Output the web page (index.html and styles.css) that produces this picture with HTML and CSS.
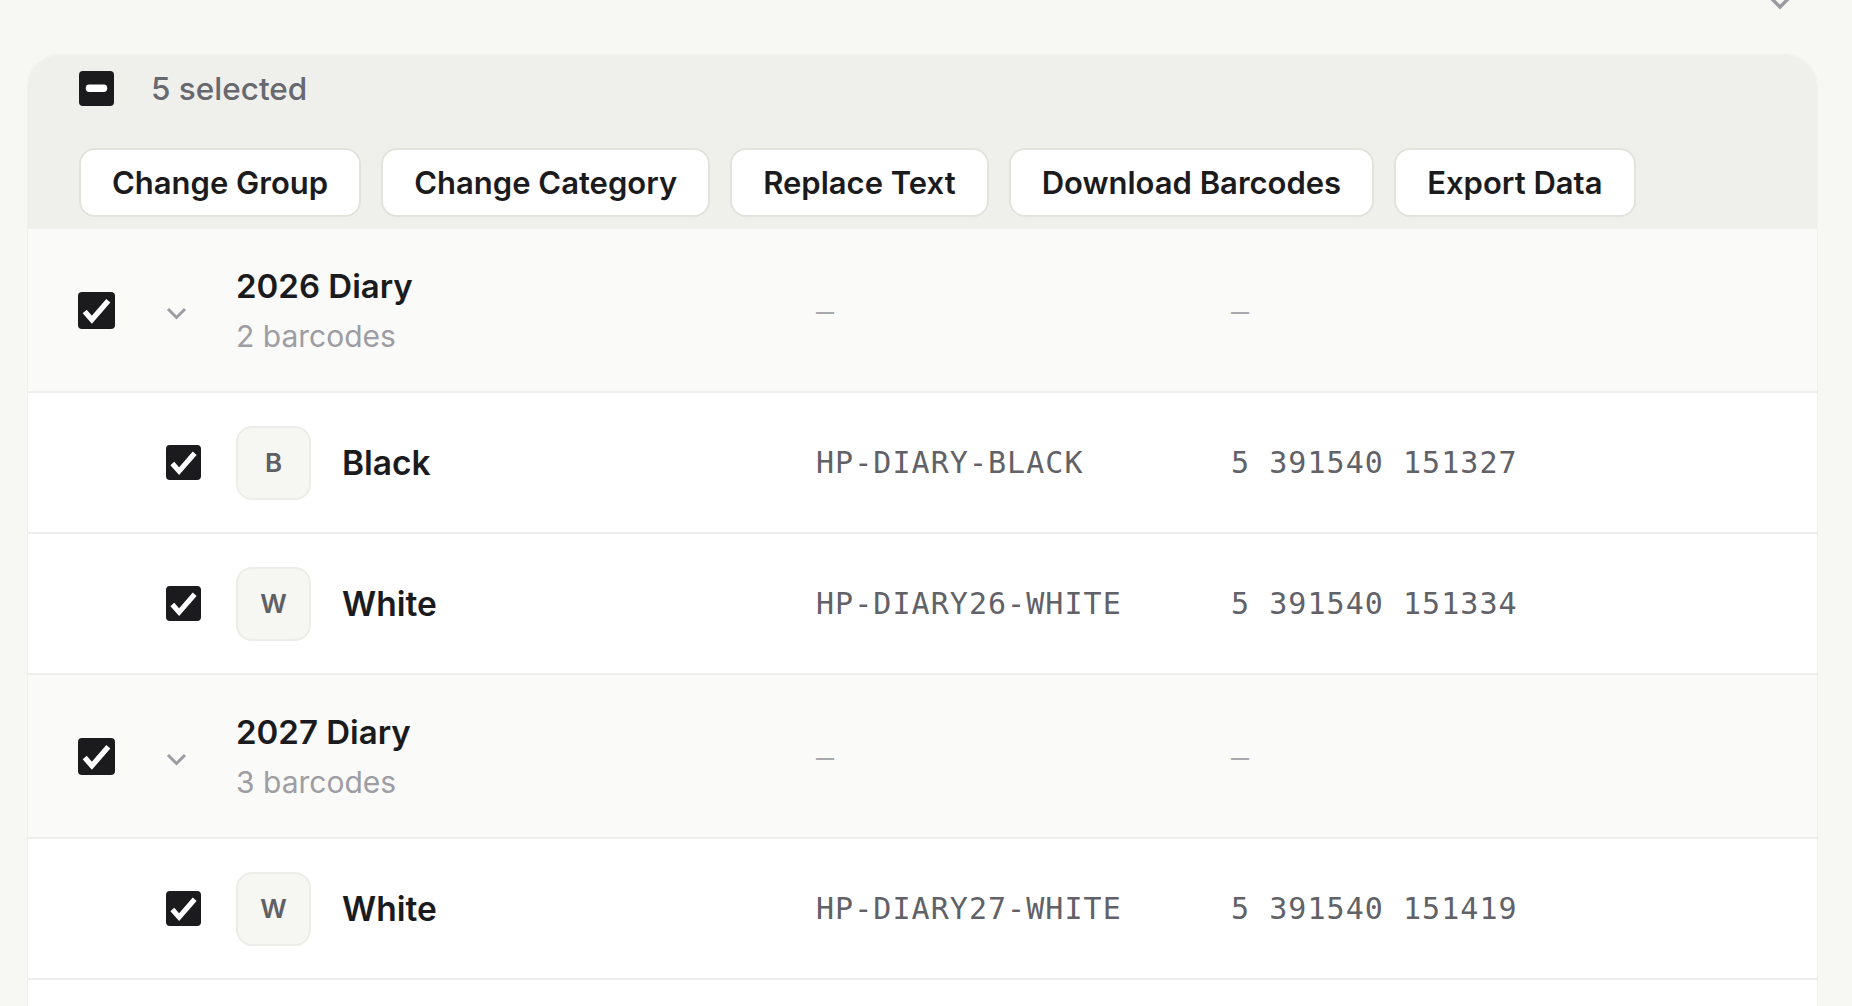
FILE: index.html
```html
<!DOCTYPE html>
<html>
<head>
  <meta charset="UTF-8">
  <meta name="viewport" content="width=device-width, initial-scale=1.0">
  <link rel="stylesheet" href="styles.css">
</head>
<body>
  <svg class="defs" width="0" height="0">
    <symbol id="box-checked" viewBox="0 0 36 36">
      <rect width="36" height="36" rx="4" fill="#1b1b1d"/>
      <polyline points="6.5,19 13.5,27 29.5,8.5" fill="none" stroke="#fff" stroke-width="5.2"/>
    </symbol>
    <symbol id="box-partial" viewBox="0 0 36 36">
      <rect width="36" height="36" rx="4" fill="#1b1b1d"/>
      <rect x="7" y="14" width="22" height="7.5" rx="3.5" fill="#fff"/>
    </symbol>
    <symbol id="chevron" viewBox="0 0 21 13">
      <polyline points="2,2 10.5,10.5 19,2" fill="none" stroke="currentColor" stroke-width="3"/>
    </symbol>
  </svg>

  <div class="topbar">
    <svg class="top-chevron" viewBox="0 0 20 20"><polyline points="2,6 10,14 18,6" fill="none" stroke="currentColor" stroke-width="3.4"/></svg>
  </div>

  <div class="card">
    <div class="bulk-bar">
      <div class="bulk-title">
        <svg class="check"><use href="#box-partial"/></svg>
        <span>5 selected</span>
      </div>
      <div class="bulk-actions">
        <button class="btn">Change Group</button>
        <button class="btn">Change Category</button>
        <button class="btn">Replace Text</button>
        <button class="btn">Download Barcodes</button>
        <button class="btn">Export Data</button>
      </div>
    </div>

    <div class="rows">
      <div class="row group">
        <svg class="check check-lg"><use href="#box-checked"/></svg>
        <svg class="chevron"><use href="#chevron"/></svg>
        <div class="group-name">
          <div class="group-title">2026 Diary</div>
          <div class="group-count">2 barcodes</div>
        </div>
        <div class="mono dash">—</div>
        <div class="mono dash">—</div>
      </div>

      <div class="row item">
        <span></span>
        <svg class="check"><use href="#box-checked"/></svg>
        <div class="item-name">
          <div class="avatar">B</div>
          <span>Black</span>
        </div>
        <div class="mono">HP-DIARY-BLACK</div>
        <div class="mono">5 391540 151327</div>
      </div>

      <div class="row item">
        <span></span>
        <svg class="check"><use href="#box-checked"/></svg>
        <div class="item-name">
          <div class="avatar">W</div>
          <span>White</span>
        </div>
        <div class="mono">HP-DIARY26-WHITE</div>
        <div class="mono">5 391540 151334</div>
      </div>

      <div class="row group">
        <svg class="check check-lg"><use href="#box-checked"/></svg>
        <svg class="chevron"><use href="#chevron"/></svg>
        <div class="group-name">
          <div class="group-title">2027 Diary</div>
          <div class="group-count">3 barcodes</div>
        </div>
        <div class="mono dash">—</div>
        <div class="mono dash">—</div>
      </div>

      <div class="row item">
        <span></span>
        <svg class="check"><use href="#box-checked"/></svg>
        <div class="item-name">
          <div class="avatar">W</div>
          <span>White</span>
        </div>
        <div class="mono">HP-DIARY27-WHITE</div>
        <div class="mono">5 391540 151419</div>
      </div>

      <div class="row item">
        <span></span>
        <svg class="check"><use href="#box-checked"/></svg>
        <div class="item-name">
          <div class="avatar">B</div>
          <span>Black</span>
        </div>
        <div class="mono">HP-DIARY27-BLACK</div>
        <div class="mono">5 391540 151402</div>
      </div>
    </div>
  </div>
</body>
</html>
```

FILE: styles.css
```css
* {
  box-sizing: border-box;
  margin: 0;
  padding: 0;
}

body {
  font-family: Inter, 'Noto Sans', sans-serif;
  background: #f7f7f3;
  color: #1b1b1d;
  overflow: hidden;
}

.defs {
  position: absolute;
}

.topbar {
  height: 54px;
  display: flex;
  justify-content: flex-end;
  padding-right: 62px;
}

.top-chevron {
  width: 20px;
  height: 20px;
  margin-top: -7px;
  color: #9a9aa0;
}

.card {
  margin: 0 34px 0 27px;
  border: 1px solid #f1f1ed;
  border-bottom: none;
  border-radius: 32px 32px 0 0;
  overflow: hidden;
  background: #ffffff;
}

.bulk-bar {
  background: #efefeb;
  padding: 16px 0 12px 51px;
}

.bulk-title {
  display: flex;
  align-items: center;
  gap: 37px;
  height: 35px;
  margin-bottom: 42px;
  font-size: 31.5px;
  font-weight: 500;
  color: #68686f;
}

.check {
  width: 35px;
  height: 35px;
  flex-shrink: 0;
}

.check-lg {
  width: 37px;
  height: 37px;
}

.bulk-actions {
  display: flex;
  gap: 20px;
}

.btn {
  height: 69px;
  padding: 0 31px;
  background: #ffffff;
  border: 2px solid #e3e3de;
  border-radius: 16px;
  font-family: inherit;
  font-size: 31px;
  font-weight: 600;
  color: #1b1b1d;
  cursor: pointer;
}

.row {
  display: grid;
  grid-template-columns: 88px 70px 580px 415px 1fr;
  align-items: center;
  padding-left: 50px;
  border-bottom: 2px solid #ededeb;
}

.row.group {
  height: 164px;
  background: #fafaf8;
}

.row.item {
  height: 141px;
  background: #ffffff;
}

.chevron {
  width: 21px;
  height: 13px;
  margin-top: 7px;
  color: #9c9ca2;
}

.group-title {
  font-size: 33px;
  line-height: 40px;
  font-weight: 600;
}

.group-count {
  margin-top: 12px;
  font-size: 30px;
  line-height: 36px;
  color: #9d9da3;
}

.item-name {
  display: flex;
  align-items: center;
  gap: 31px;
  font-size: 33.5px;
  font-weight: 600;
}

.avatar {
  width: 75px;
  height: 74px;
  display: flex;
  align-items: center;
  justify-content: center;
  background: #f6f6f2;
  border: 2px solid #ecece8;
  border-radius: 16px;
  font-size: 26px;
  font-weight: 600;
  color: #5f5f66;
}

.mono {
  font-family: 'DejaVu Sans Mono', 'Liberation Mono', monospace;
  font-size: 30px;
  letter-spacing: 1.05px;
  color: #616168;
}

.mono.dash {
  color: #a8a8ad;
}
```
